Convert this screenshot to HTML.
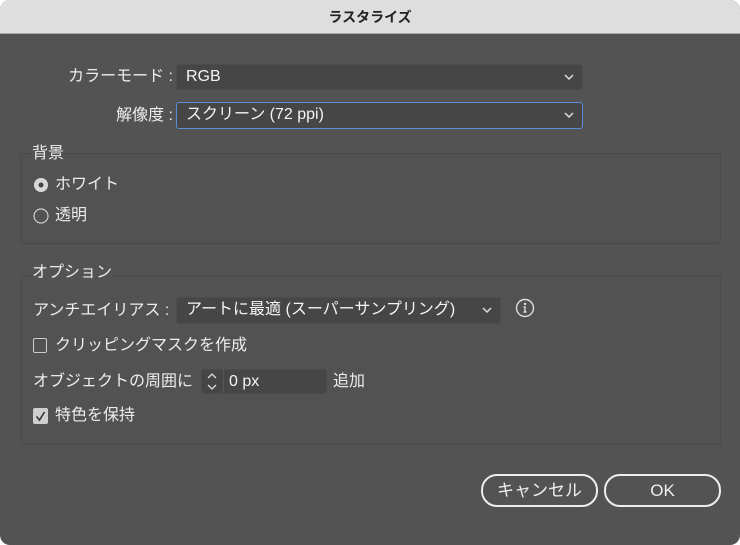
<!DOCTYPE html>
<html><head><meta charset="utf-8"><style>
*{box-sizing:border-box;margin:0;padding:0}
body{width:740px;height:545px;background:#fff;font-family:"Liberation Sans","Noto Sans CJK JP",sans-serif;color:#ececec;font-size:16px;overflow:hidden;position:relative}
.dlg{position:absolute;left:0;top:0;width:740px;height:545px;background:#535353;border-radius:10px;overflow:hidden}
.title{height:34px;background:#dedede;border-bottom:1px solid #a8a8a8;color:#222;font-weight:bold;font-size:14px;text-align:center;line-height:34px}
.a{position:absolute;white-space:nowrap;line-height:20px}
.dd{position:absolute;background:#464646;border:1px solid #4c4c4c;border-radius:3px;padding-left:9px;line-height:24px;color:#f4f4f4;font-size:16px}
.dd svg{position:absolute;right:8px;top:9px}
.box{position:absolute;border:1px solid #4a4a4a;border-radius:3px;background:#525252}
.btn{position:absolute;border:2px solid #eee;border-radius:16px;text-align:center;line-height:29px;color:#eee;font-size:17px}
</style></head><body><div class="dlg">
<div class="title">ラスタライズ</div>
<div class="a" style="right:567px;top:67px">カラーモード :</div>
<div class="dd" style="left:176px;top:64px;width:407px;height:26px">RGB<svg width="10" height="6"><path d="M1 1l4 4 4-4" stroke="#ddd" stroke-width="1.5" fill="none"/></svg></div>
<div class="a" style="right:567px;top:106px">解像度 :</div>
<div class="dd" style="left:176px;top:102px;width:407px;height:27px;border:1.5px solid #5a8fd8">スクリーン (72 ppi)<svg width="10" height="6"><path d="M1 1l4 4 4-4" stroke="#ddd" stroke-width="1.5" fill="none"/></svg></div>
<div class="box" style="left:20px;top:153px;width:701px;height:91px"></div>
<div class="a" style="left:32px;top:144px;background:#535353">背景</div>
<svg class="a" style="left:33px;top:177px" width="16" height="16"><circle cx="8" cy="8" r="7" fill="#d8d8d8"/><circle cx="8" cy="8" r="2.5" fill="#444"/></svg>
<div class="a" style="left:55px;top:175px">ホワイト</div>
<svg class="a" style="left:33px;top:208px" width="16" height="16"><circle cx="8" cy="8" r="7" fill="none" stroke="#ccc" stroke-width="1.2"/></svg>
<div class="a" style="left:55px;top:206px">透明</div>
<div class="box" style="left:20px;top:275px;width:701px;height:170px"></div>
<div class="a" style="left:32px;top:263px;background:#535353">オプション</div>
<div class="a" style="left:33px;top:301px">アンチエイリアス :</div>
<div class="dd" style="left:176px;top:297px;width:325px;height:27px">アートに最適 (スーパーサンプリング)<svg width="10" height="6"><path d="M1 1l4 4 4-4" stroke="#ddd" stroke-width="1.5" fill="none"/></svg></div>
<svg class="a" style="left:515px;top:298px" width="20" height="20"><circle cx="10" cy="10" r="8.5" fill="none" stroke="#ddd" stroke-width="1.4"/><circle cx="10" cy="6" r="1.2" fill="#ddd"/><path d="M8.5 9h1.5v5M8.5 14h3" stroke="#ddd" stroke-width="1.4" fill="none"/></svg>
<div class="a" style="left:33px;top:338px;width:14px;height:15px;border:1.3px solid #ccc;border-radius:2px"></div>
<div class="a" style="left:55px;top:336px">クリッピングマスクを作成</div>
<div class="a" style="left:33px;top:372px">オブジェクトの周囲に</div>
<div class="a" style="left:201px;top:369px;width:126px;height:25px;background:#464646;border:1px solid #4c4c4c;border-radius:3px"></div>
<svg class="a" style="left:204px;top:371px" width="16" height="21"><path d="M4 7l4-4 4 4M4 14l4 4 4-4" stroke="#ddd" stroke-width="1.3" fill="none"/></svg>
<div class="a" style="left:223px;top:369px;width:1px;height:25px;background:#555"></div>
<div class="a" style="left:229px;top:372px;color:#f4f4f4">0 px</div>
<div class="a" style="left:333px;top:372px">追加</div>
<svg class="a" style="left:33px;top:408px" width="15" height="16"><rect x="0" y="0" width="15" height="16" rx="2" fill="#cfcfcf"/><path d="M3.5 8.5l3 3.5 5-8" stroke="#333" stroke-width="1.6" fill="none"/></svg>
<div class="a" style="left:55px;top:406px">特色を保持</div>
<div class="btn" style="left:481px;top:474px;width:117px;height:33px">キャンセル</div>
<div class="btn" style="left:604px;top:474px;width:117px;height:33px">OK</div>
</div></body></html>
